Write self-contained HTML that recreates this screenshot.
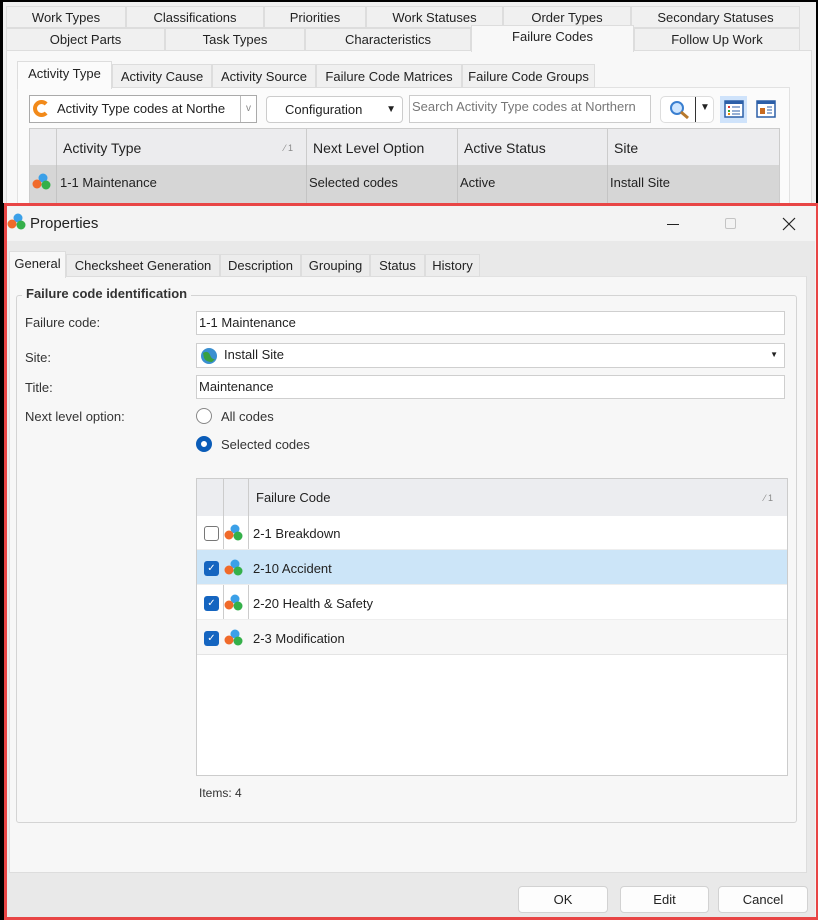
<!DOCTYPE html>
<html><head><meta charset="utf-8"><style>
*{box-sizing:border-box;margin:0;padding:0}
body{width:818px;height:920px;position:relative;background:#000;font-family:"Liberation Sans",sans-serif;font-size:13px;color:#222;overflow:hidden}
.a{position:absolute}
.tab{position:absolute;height:22px;border:1px solid #ddd;background:#f0f0f0;text-align:center;line-height:21px;font-size:13px;color:#222}
.in{position:absolute;background:#fff;border:1px solid #cfcfcf;line-height:21px;padding-left:2px;font-size:13px}
.lbl{position:absolute;left:25px;font-size:13px;color:#333}
.cb{position:absolute;left:204px;width:15px;height:15px;border-radius:3px;background:#1565c0;color:#fff;font-size:10px;line-height:15px;text-align:center}
.btn{position:absolute;top:886px;height:27px;background:#fdfdfd;border:1px solid #d2d2d2;border-radius:4px;text-align:center;line-height:25px;font-size:13px}
</style></head><body>
<div class="a" style="left:3px;top:2px;width:813px;height:201px;background:#f0f0f0"></div>
<!-- row1 tabs -->
<div class="tab" style="left:6px;top:6px;width:120px">Work Types</div>
<div class="tab" style="left:126px;top:6px;width:138px">Classifications</div>
<div class="tab" style="left:264px;top:6px;width:102px">Priorities</div>
<div class="tab" style="left:366px;top:6px;width:137px">Work Statuses</div>
<div class="tab" style="left:503px;top:6px;width:128px">Order Types</div>
<div class="tab" style="left:631px;top:6px;width:169px">Secondary Statuses</div>
<div class="tab" style="left:6px;top:28px;width:159px;height:23px">Object Parts</div>
<div class="tab" style="left:165px;top:28px;width:140px;height:23px">Task Types</div>
<div class="tab" style="left:305px;top:28px;width:166px;height:23px">Characteristics</div>
<div class="tab" style="left:634px;top:28px;width:166px;height:23px">Follow Up Work</div>
<div class="a" style="left:6px;top:50px;width:806px;height:160px;background:#f8f8f8;border:1px solid #ddd"></div>
<div class="tab" style="left:471px;top:25px;width:163px;height:27px;background:#f8f8f8;border-bottom:none">Failure Codes</div>
<!-- subtabs -->
<div class="a" style="left:17px;top:87px;width:773px;height:120px;background:#fbfbfb;border:1px solid #e2e2e2"></div>
<div class="tab" style="left:112px;top:64px;width:100px;height:24px;line-height:23px">Activity Cause</div>
<div class="tab" style="left:212px;top:64px;width:104px;height:24px;line-height:23px">Activity Source</div>
<div class="tab" style="left:316px;top:64px;width:146px;height:24px;line-height:23px">Failure Code Matrices</div>
<div class="tab" style="left:462px;top:64px;width:133px;height:24px;line-height:23px">Failure Code Groups</div>
<div class="tab" style="left:17px;top:61px;width:95px;height:28px;background:#fbfbfb;border-bottom:none;line-height:24px">Activity Type</div>
<!-- toolbar -->
<div class="in" style="left:29px;top:95px;width:228px;height:28px;line-height:25px;padding-left:27px;border-color:#aaa;overflow:hidden;white-space:nowrap">Activity Type codes at Northe<span style="position:absolute;right:0;top:0;width:16px;height:26px;border-left:1px solid #bbb;background:#fff;color:#888;font-size:10px;text-align:center">v</span></div>
<div class="a" style="left:33px;top:100px;width:17px;height:17px;border-radius:50%;border:4px solid #f28a1a;border-right-color:transparent"></div>
<div class="in" style="left:266px;top:96px;width:137px;height:27px;border-radius:4px;border-color:#ccc;padding-left:18px;line-height:26px">Configuration<span style="position:absolute;right:6px;font-size:10px">▼</span></div>
<div class="in" style="left:409px;top:95px;width:242px;height:28px;color:#777;line-height:22px;white-space:nowrap;overflow:hidden;border-color:#ccc">Search Activity Type codes at Northern</div>
<div class="in" style="left:660px;top:96px;width:54px;height:27px;border-radius:5px;border-color:#ddd"><span style="position:absolute;left:34px;top:0;height:25px;border-left:1px solid #333"></span><span style="position:absolute;left:39px;top:0;font-size:10px">▼</span>
<svg class="a" style="left:8px;top:3px" width="22" height="20"><circle cx="8" cy="8" r="6" fill="#cfe6ff" stroke="#3a7fd0" stroke-width="2"/><path d="M12 12 L19 18" stroke="#b7782c" stroke-width="3"/></svg></div>
<div class="a" style="left:720px;top:96px;width:27px;height:27px;background:#cfe3fb"></div>
<svg class="a" style="left:724px;top:100px" width="20" height="18"><rect x="1" y="1" width="18" height="16" fill="#fff" stroke="#2c5fa8" stroke-width="1.5"/><rect x="1" y="1" width="18" height="3" fill="#2c5fa8"/><rect x="4" y="6" width="2" height="2" fill="#d33"/><rect x="4" y="10" width="2" height="2" fill="#3a3"/><rect x="4" y="13" width="2" height="2" fill="#e80"/><path d="M8 7h8M8 11h8M8 14h8" stroke="#2c5fa8"/></svg>
<svg class="a" style="left:756px;top:100px" width="20" height="18"><rect x="1" y="1" width="18" height="16" fill="#fff" stroke="#2c5fa8" stroke-width="1.5"/><rect x="1" y="1" width="18" height="3" fill="#2c5fa8"/><rect x="4" y="8" width="5" height="6" fill="#c96a1e"/><path d="M11 7h5M11 10h5M11 13h5" stroke="#2c5fa8"/></svg>
<!-- grid -->
<div class="a" style="left:29px;top:128px;width:751px;height:80px;background:#ececee;border:1px solid #ccc"></div>
<div class="a" style="left:56px;top:129px;height:36px;border-left:1px solid #ccc"></div>
<div class="a" style="left:306px;top:129px;height:75px;border-left:1px solid #ccc"></div>
<div class="a" style="left:457px;top:129px;height:75px;border-left:1px solid #ccc"></div>
<div class="a" style="left:607px;top:129px;height:75px;border-left:1px solid #ccc"></div>
<div class="a" style="left:63px;top:140px;font-size:14px">Activity Type</div>
<div class="a" style="left:284px;top:143px;font-size:9px;color:#888">⁄ 1</div>
<div class="a" style="left:313px;top:140px;font-size:14px">Next Level Option</div>
<div class="a" style="left:464px;top:140px;font-size:14px">Active Status</div>
<div class="a" style="left:614px;top:140px;font-size:14px">Site</div>
<div class="a" style="left:30px;top:165px;width:749px;height:40px;background:#d6d6d6"></div>
<div class="a" style="left:56px;top:165px;height:40px;border-left:1px solid #c4c4c4"></div>
<div class="a" style="left:306px;top:165px;height:40px;border-left:1px solid #c4c4c4"></div>
<div class="a" style="left:457px;top:165px;height:40px;border-left:1px solid #c4c4c4"></div>
<div class="a" style="left:607px;top:165px;height:40px;border-left:1px solid #c4c4c4"></div>
<svg class="a" style="left:32px;top:173px" width="20" height="18"><circle cx="11" cy="5" r="4.5" fill="#3ba0e8"/><circle cx="5" cy="11" r="4.5" fill="#f06a2a"/><circle cx="14" cy="12" r="4.5" fill="#35b04a"/></svg>
<div class="a" style="left:60px;top:175px">1-1 Maintenance</div>
<div class="a" style="left:309px;top:175px">Selected codes</div>
<div class="a" style="left:460px;top:175px">Active</div>
<div class="a" style="left:610px;top:175px">Install Site</div>
<!-- dialog -->
<div class="a" style="left:4px;top:203px;width:814px;height:717px;border:3px solid #e84545;border-right-width:2px;background:#f3f3f3"></div>
<div class="a" style="left:7px;top:241px;width:808px;height:676px;background:#e9e9e9"></div>
<svg class="a" style="left:7px;top:213px" width="20" height="18"><circle cx="11" cy="5" r="4.5" fill="#3ba0e8"/><circle cx="5" cy="11" r="4.5" fill="#f06a2a"/><circle cx="14" cy="12" r="4.5" fill="#35b04a"/></svg>
<div class="a" style="left:30px;top:215px;font-size:15px">Properties</div>
<div class="a" style="left:667px;top:224px;width:12px;border-top:1px solid #222"></div>
<div class="a" style="left:725px;top:218px;width:11px;height:11px;border:1px solid #c4c4c4;border-radius:2px"></div>
<svg class="a" style="left:782px;top:217px" width="14" height="14"><path d="M1 1L13 13M13 1L1 13" stroke="#222" stroke-width="1.2"/></svg>
<div class="a" style="left:9px;top:276px;width:798px;height:597px;background:#f7f7f7;border:1px solid #ddd;border-top-color:#e2e2e2"></div>
<div class="tab" style="left:66px;top:254px;width:154px;height:23px;background:#ececec">Checksheet Generation</div>
<div class="tab" style="left:220px;top:254px;width:81px;height:23px;background:#ececec">Description</div>
<div class="tab" style="left:301px;top:254px;width:69px;height:23px;background:#ececec">Grouping</div>
<div class="tab" style="left:370px;top:254px;width:55px;height:23px;background:#ececec">Status</div>
<div class="tab" style="left:425px;top:254px;width:55px;height:23px;background:#ececec">History</div>
<div class="tab" style="left:9px;top:251px;width:57px;height:27px;background:#f7f7f7;border-bottom:none;line-height:24px">General</div>
<div class="a" style="left:16px;top:295px;width:781px;height:528px;border:1px solid #d4d4d4;border-radius:3px"></div>
<div class="a" style="left:22px;top:286px;padding:0 4px;background:#f7f7f7;font-weight:bold;font-size:13px;color:#333">Failure code identification</div>
<div class="lbl" style="top:315px">Failure code:</div>
<div class="lbl" style="top:350px">Site:</div>
<div class="lbl" style="top:380px">Title:</div>
<div class="lbl" style="top:409px">Next level option:</div>
<div class="in" style="left:196px;top:311px;width:589px;height:24px">1-1 Maintenance</div>
<div class="in" style="left:196px;top:343px;width:589px;height:25px;padding-left:27px">Install Site<span style="position:absolute;right:6px;font-size:8px">▼</span></div>
<svg class="a" style="left:200px;top:347px" width="18" height="18"><circle cx="9" cy="9" r="8" fill="#3a8fd0"/><path d="M3 6 Q8 3 10 8 T15 12 L12 15 Q6 15 4 11Z" fill="#3aa040"/></svg>
<div class="in" style="left:196px;top:375px;width:589px;height:24px">Maintenance</div>
<div class="a" style="left:196px;top:408px;width:16px;height:16px;border-radius:50%;border:1px solid #888;background:#fff"></div>
<div class="a" style="left:221px;top:409px;color:#333">All codes</div>
<div class="a" style="left:196px;top:436px;width:16px;height:16px;border-radius:50%;border:5px solid #0a5cb8;background:#fff"></div>
<div class="a" style="left:221px;top:437px;color:#333">Selected codes</div>
<!-- inner grid -->
<div class="a" style="left:196px;top:478px;width:592px;height:298px;background:#fff;border:1px solid #ccc"></div>
<div class="a" style="left:197px;top:479px;width:590px;height:37px;background:#ecedf0"></div>
<div class="a" style="left:223px;top:479px;height:176px;border-left:1px solid #ccc"></div>
<div class="a" style="left:248px;top:479px;height:176px;border-left:1px solid #ccc"></div>
<div class="a" style="left:256px;top:490px">Failure Code</div>
<div class="a" style="left:764px;top:493px;font-size:9px;color:#888">⁄ 1</div>
<div class="a" style="left:197px;top:550px;width:590px;height:35px;background:#cce5f8"></div>
<div class="a" style="left:197px;top:620px;width:590px;height:35px;background:#f7f7f7"></div>
<div class="a" style="left:197px;top:549px;width:590px;border-top:1px solid #eee"></div>
<div class="a" style="left:197px;top:584px;width:590px;border-top:1px solid #eee"></div>
<div class="a" style="left:197px;top:619px;width:590px;border-top:1px solid #eee"></div>
<div class="a" style="left:197px;top:654px;width:590px;border-top:1px solid #e4e4e4"></div>
<div class="a" style="left:204px;top:526px;width:15px;height:15px;border:1px solid #777;border-radius:3px;background:#fff"></div>
<div class="cb" style="top:561px">✓</div>
<div class="cb" style="top:596px">✓</div>
<div class="cb" style="top:631px">✓</div>
<svg class="a" style="left:224px;top:524px" width="20" height="18"><circle cx="11" cy="5" r="4.5" fill="#3ba0e8"/><circle cx="5" cy="11" r="4.5" fill="#f06a2a"/><circle cx="14" cy="12" r="4.5" fill="#35b04a"/></svg>
<svg class="a" style="left:224px;top:559px" width="20" height="18"><circle cx="11" cy="5" r="4.5" fill="#3ba0e8"/><circle cx="5" cy="11" r="4.5" fill="#f06a2a"/><circle cx="14" cy="12" r="4.5" fill="#35b04a"/></svg>
<svg class="a" style="left:224px;top:594px" width="20" height="18"><circle cx="11" cy="5" r="4.5" fill="#3ba0e8"/><circle cx="5" cy="11" r="4.5" fill="#f06a2a"/><circle cx="14" cy="12" r="4.5" fill="#35b04a"/></svg>
<svg class="a" style="left:224px;top:629px" width="20" height="18"><circle cx="11" cy="5" r="4.5" fill="#3ba0e8"/><circle cx="5" cy="11" r="4.5" fill="#f06a2a"/><circle cx="14" cy="12" r="4.5" fill="#35b04a"/></svg>
<div class="a" style="left:253px;top:526px">2-1 Breakdown</div>
<div class="a" style="left:253px;top:561px">2-10 Accident</div>
<div class="a" style="left:253px;top:596px">2-20 Health &amp; Safety</div>
<div class="a" style="left:253px;top:631px">2-3 Modification</div>
<div class="a" style="left:199px;top:786px;font-size:12px;color:#333">Items: 4</div>
<div class="btn" style="left:518px;width:90px">OK</div>
<div class="btn" style="left:620px;width:89px">Edit</div>
<div class="btn" style="left:718px;width:90px">Cancel</div>
</body></html>
